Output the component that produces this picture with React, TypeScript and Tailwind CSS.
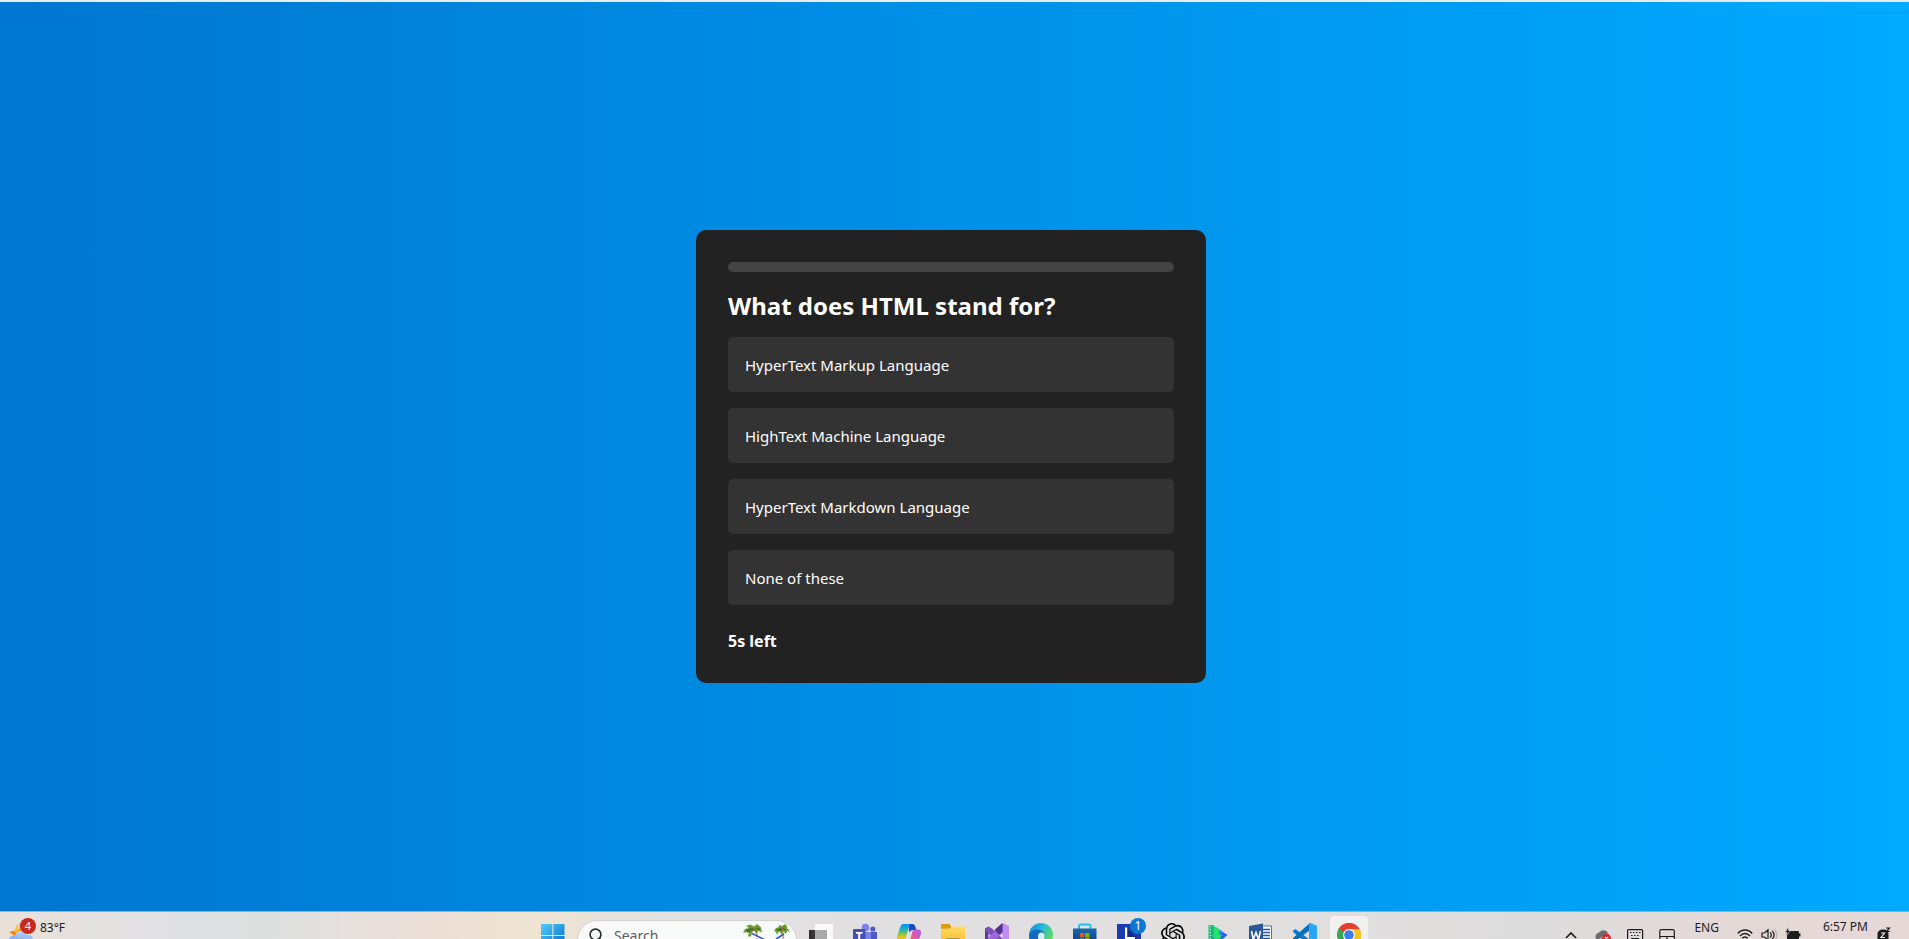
import type { ReactNode } from "react";
import { SiOpenai } from "react-icons/si";

const options = [
  "HyperText Markup Language",
  "HighText Machine Language",
  "HyperText Markdown Language",
  "None of these",
];

function QuizCard() {
  return (
    <section className="w-full max-w-[510px] rounded-[10px] bg-[#222222] p-8 text-white">
      <div
        className="h-2.5 rounded-[5px] bg-[#444444]"
        role="progressbar"
        aria-label="Quiz progress"
        aria-valuenow={0}
      />
      <h1 className="mt-4 mb-[13px] text-[24px] leading-9 font-bold">What does HTML stand for?</h1>
      <ul className="flex flex-col gap-4">
        {options.map((option) => (
          <li key={option}>
            <button
              type="button"
              className="block w-full rounded-[5px] bg-[#333333] px-[17px] pt-[17px] pb-[15px] text-left text-[15px] leading-[23px]"
            >
              {option}
            </button>
          </li>
        ))}
      </ul>
      <p className="mt-[26px] text-[16px] leading-5 font-bold">5s left</p>
    </section>
  );
}

function AppButton({ label, children }: { label: string; children: ReactNode }) {
  return (
    <button type="button" aria-label={label} className="shrink-0 pt-[11px]">
      <svg viewBox="0 0 24 24" className="block h-6 w-6 overflow-visible" aria-hidden="true">
        {children}
      </svg>
    </button>
  );
}

function Weather() {
  return (
    <button type="button" className="flex items-start gap-[7px] pl-[9px] text-left">
      <svg viewBox="0 0 24 28" className="block h-7 w-6 shrink-0 overflow-visible" aria-hidden="true">
        <defs>
          <linearGradient id="cloud" x1="0" y1="0" x2="0" y2="1">
            <stop stopColor="#b9d2fb" />
            <stop offset="1" stopColor="#7ba3ee" />
          </linearGradient>
        </defs>
        <path d="M10 10v9h6v-9l-3 6z" fill="#fbb91d" />
        <path d="M0 20l7 5 6-8-7 1.500z" fill="#f18a15" />
        <path d="M8.500 11l1.500 10-5-1z" fill="#fbc02d" />
        <circle cx="12" cy="25.500" r="6.500" fill="url(#cloud)" />
        <circle cx="4.500" cy="28" r="4.500" fill="#8fb1f3" />
        <circle cx="19.500" cy="27.500" r="4.500" fill="#9dbdf7" />
        <circle cx="19" cy="14" r="8" fill="#c42b1c" />
        <text x="19" y="18" textAnchor="middle" fontSize="11" fill="#fff">4</text>
      </svg>
      <span className="pt-[7px] text-[12px] leading-[18px]">
        <span className="block text-[#1b1b1b]">83°F</span>
        <span className="block text-[#5c5c5c]">Mostly cloudy</span>
      </span>
    </button>
  );
}

function SearchBox() {
  return (
    <label className="mx-3 mt-2 flex h-10 w-[220px] shrink-0 items-start rounded-full border border-[#d5d1d0] bg-[#f8f9f9] pl-2.5">
      <svg viewBox="0 0 16 16" className="mt-[7px] h-4 w-4 shrink-0" aria-hidden="true">
        <circle cx="7.500" cy="6.500" r="5.400" fill="none" stroke="#2b2b2b" strokeWidth="1.600" />
        <path d="M11.500 10.500L15 14" stroke="#2b2b2b" strokeWidth="1.600" />
      </svg>
      <input
        type="text"
        placeholder="Search"
        className="mt-[5px] ml-2.5 h-5 w-[118px] bg-transparent text-[14px] leading-5 outline-none placeholder:text-[#5f5f5f]"
      />
      <svg viewBox="0 0 50 20" className="mt-[3px] ml-2.5 h-5 w-[50px] shrink-0" aria-hidden="true">
        <path d="M13.500 6c1 3 1 8 .3 14h2c.4-6-.3-10-1.300-14zM40 6c.6 3 .6 8 0 14h2c.3-6 0-10-1-14z" fill="#d99b52" />
        <path d="M10 9.500l11 5.500 3 1M34 15l8-5" stroke="#2d61c4" strokeWidth="1.700" fill="none" />
        <path d="M12 12l8 4" stroke="#eef4ff" strokeWidth="1" />
        <path d="M1 9l2-4 4-1-3-2 4-1.500 4 2 3-2.500 3 2.500 1 1 1 5-4-2-1 4-3-4-2 2-1 4-3 0 1-5z" fill="#6d9a35" />
        <path d="M4 6l5-2 4 1 4-1.500 1.500 3-4-1.500-3 1-3 1-3 2z" fill="#3f7128" />
        <path d="M32 7l2-3 3-1 0-2 3 1 3-2 2 2 0 2 3 4-3-1-1 3-3-3-1 4-3-4-2 4-1-3z" fill="#6d9a35" />
        <path d="M34 6l4-2 3 0 4 2-4 0-2 1-3 0z" fill="#3f7128" />
        <circle cx="13" cy="6" r="1.200" fill="#b4622a" />
        <circle cx="40.500" cy="5" r="1.200" fill="#b4622a" />
      </svg>
    </label>
  );
}

function Apps() {
  return (
    <nav aria-label="Taskbar" className="flex items-start">
      <AppButton label="Start">
        <defs>
          <linearGradient id="win" gradientUnits="userSpaceOnUse" x1="0" y1="0" x2="24" y2="24">
            <stop stopColor="#52d3fc" />
            <stop offset="1" stopColor="#0067c8" />
          </linearGradient>
        </defs>
        <path d="M0 1h11.300v11H0zM12.300 1H23.500v11H12.300zM0 13h11.300v11H0zM12.300 13H23.500v11H12.300z" fill="url(#win)" />
      </AppButton>
      <SearchBox />
      <div className="flex items-start gap-5">
        <AppButton label="Task view">
          <defs>
            <linearGradient id="tv" x1="0" y1="0" x2="1" y2="0">
              <stop stopColor="#2d2b2a" />
              <stop offset="1" stopColor="#555" />
            </linearGradient>
          </defs>
          <path d="M6 1h18v18H6z" fill="#fafafa" />
          <path d="M0 7h18v16H0z" fill="url(#tv)" />
          <path d="M6 7h12v12H6z" fill="#a9a9a9" />
        </AppButton>
        <AppButton label="Teams">
          <circle cx="12.500" cy="4.500" r="3.800" fill="#7b83eb" />
          <circle cx="19.800" cy="6" r="2.600" fill="#5059c9" />
          <path d="M17 9h7v8a4 4 0 0 1-7 2z" fill="#4f58c6" />
          <path d="M8 9h10v9a5 5 0 0 1-10 0z" fill="#7b83eb" />
          <rect y="6" width="12.500" height="12.500" rx="1" fill="#464eb8" />
          <path d="M3 9h6.500v1.800H7.200V17h-2v-6.200H3z" fill="#fff" />
        </AppButton>
        <AppButton label="Copilot">
          <defs>
            <linearGradient id="cpA" x1="0" y1="0" x2="0" y2="1">
              <stop stopColor="#0a8df0" />
              <stop offset=".35" stopColor="#20b8b5" />
              <stop offset=".6" stopColor="#8cc63f" />
              <stop offset=".8" stopColor="#f5c518" />
              <stop offset="1" stopColor="#f08a24" />
            </linearGradient>
            <linearGradient id="cpB" x1="1" y1="0" x2="0" y2="1">
              <stop stopColor="#9b5cf6" />
              <stop offset=".5" stopColor="#f0569a" />
              <stop offset="1" stopColor="#f7854d" />
            </linearGradient>
          </defs>
          <path d="M11 1h4.500c1.500 0 2.300 1 2.800 2.500L19.500 7H16c-2 0-3 1-3.500 3z" fill="#1746c8" />
          <path d="M6.500 1H14c-1.500.3-2 2-2.500 4L8.500 16c-.5 1.500-1.500 2-3 2H3c-3 0-3.500-2.500-2.800-5L3.500 3.500C4 2 5 1 6.500 1z" fill="url(#cpA)" />
          <path d="M17.500 23H10c1.500-.3 2-2 2.500-4l3-10.500c.5-1.500 1.500-2 3-2H21c3 0 3.500 2.500 2.800 5l-3.300 9C20 22 19 23 17.500 23z" fill="url(#cpB)" />
        </AppButton>
        <AppButton label="File Explorer">
          <defs>
            <linearGradient id="fold" x1="0" y1="0" x2="0" y2="1">
              <stop stopColor="#ffdc6b" />
              <stop offset="1" stopColor="#fbb91f" />
            </linearGradient>
          </defs>
          <path d="M0 2.200C0 1.500.5 1 1.200 1h6.600c.6 0 1 .3 1.300.8L10.500 4H23c.6 0 1 .4 1 1v3H0z" fill="#dd9a0c" />
          <path d="M0 7c0-.8.4-1.300 1-1.300h7.500L10.500 3.500H23c.6 0 1 .5 1 1V21H0z" fill="url(#fold)" />
          <path d="M5 24v-7.500c0-.8.5-1.500 1.500-1.500h11c1 0 1.500.7 1.500 1.500V24z" fill="#a39650" />
        </AppButton>
        <AppButton label="Visual Studio">
          <path d="M0 5.500L3.500 3.500V20.500L0 18.500z" fill="#5b3a9e" />
          <path d="M3.500 3.500L7 5.500 20 18l-3 6L0 7z" fill="#7e50c0" />
          <path d="M17.500 0L20 8 5 21 0 18.500z" fill="#9a68d8" />
          <path d="M17.500 0L24 3v18l-6.500 3z" fill="#c08cf4" />
          <path d="M13 3.800L17.500 0v9L14 11.500 9.500 7z" fill="#54338f" />
        </AppButton>
        <AppButton label="Edge">
          <defs>
            <linearGradient id="edA" x1="0" y1="0" x2="1" y2=".5">
              <stop stopColor="#1684dc" />
              <stop offset=".5" stopColor="#27b9dc" />
              <stop offset="1" stopColor="#5fdc5a" />
            </linearGradient>
          </defs>
          <circle cx="12" cy="12" r="12" fill="url(#edA)" />
          <path d="M0 13C1 8 5 6 9 6.500c4 .3 7 3 7 6-1-2.500-6-3-7 .5-.8 4 3 8 7 9C8 26 0 21 0 13z" fill="#1269c2" />
          <path d="M9 13c0-2.500 2-4 4-3.500 2 .4 3 2 2.500 4-.5 1.500-.8 2 .5 3H10c-.7-1-1-2-1-3.500z" fill="#d9eef2" />
        </AppButton>
        <AppButton label="Microsoft Store">
          <defs>
            <linearGradient id="store" x1="0" y1="0" x2="0" y2="1">
              <stop stopColor="#1b66b0" />
              <stop offset="1" stopColor="#0c3a76" />
            </linearGradient>
          </defs>
          <path d="M6 7V3c0-1 .6-1.500 1.500-1.500h8.500c1 0 1.500.6 1.500 1.500v4" fill="none" stroke="#27bdf2" strokeWidth="2" />
          <path d="M0 5.500h23.500V20a3 3 0 0 1-3 3H3a3 3 0 0 1-3-3z" fill="url(#store)" />
          <path d="M7 10h4.200v4.200H7z" fill="#f25022" />
          <path d="M12.200 10h4.200v4.200h-4.200z" fill="#7fba00" />
          <path d="M7 15.200h4.200v4.200H7z" fill="#00a4ef" />
          <path d="M12.200 15.200h4.200v4.200h-4.200z" fill="#ffb900" />
        </AppButton>
        <AppButton label="Installer">
          <path d="M0 1h24v23H0z" fill="#1b3bae" />
          <path d="M10 5l14 14v5H8z" fill="#142c86" />
          <path d="M8 4.500h2.200V14H18v2.500H8z" fill="#fff" />
          <circle cx="21" cy="3" r="8" fill="#0b78d4" />
          <text x="21" y="7" textAnchor="middle" fontSize="12" fill="#fff">1</text>
        </AppButton>
        <button type="button" aria-label="ChatGPT" className="shrink-0 pt-[11px]">
          <SiOpenai className="block h-6 w-6 text-black" aria-hidden="true" />
        </button>
        <AppButton label="Media player">
          <path d="M13 6l9.500 6-8.500 7z" fill="#1e62e8" />
          <path d="M8 3l9 5-2 12-7 2z" fill="#2e8df0" />
          <path d="M3.500 2h5v20h-5z" fill="#15b07c" />
          <path d="M4.500 3.500h1.500M4.500 6.500h1.500M4.500 9.500h1.500M4.500 12.500h1.500M4.500 15.500h1.500" stroke="#a5f7d2" strokeWidth="1.400" />
          <path d="M8.500 2.500L14 6v6h3.500L12 18l-5.500-6h2z" fill="#25e46b" />
        </AppButton>
        <AppButton label="Word">
          <path d="M11 3h11.500v18H11z" fill="#fff" stroke="#2b579a" strokeWidth=".8" />
          <path d="M14 6.500h7M14 9.500h7M14 12.500h7M14 15.500h7" stroke="#2b579a" strokeWidth="1.300" />
          <path d="M0 3L14 .5v23L0 21z" fill="#2b579a" />
          <path d="M2.500 8l1.800 8.500L7 9.500l2.500 7L11.500 8" fill="none" stroke="#fff" strokeWidth="1.600" />
        </AppButton>
        <AppButton label="Visual Studio Code">
          <path d="M1.500 6.500L.3 7.800c-.4.400-.4 1 0 1.400L18 24v-6.300L3 6.400c-.5-.3-1-.2-1.500.1z" fill="#0b7ac8" />
          <path d="M1.500 17.500L.3 16.200c-.4-.4-.4-1 0-1.400L17 0l1 6.300L3 17.600c-.5.300-1 .2-1.500-.1z" fill="#0a6fbd" />
          <path d="M17.500 0L24 2.800v18.400L17.500 24c-.8 0-1.500-.5-1.500-1.500V1.200c0-.8.700-1.200 1.500-1.200z" fill="#2aa6f2" />
        </AppButton>
      </div>
      <button
        type="button"
        aria-label="Chrome"
        className="mt-1 ml-[13px] shrink-0 rounded-[4px] bg-[#f3f0f0] px-[7px] pt-[7px] pb-[9px]"
      >
        <svg viewBox="0 0 24 24" className="block h-6 w-6" aria-hidden="true">
          <circle cx="12" cy="12" r="12" fill="#34a853" />
          <path d="M12 12L1.600 6A12 12 0 0 1 22.400 6z" fill="#ea3d30" />
          <path d="M12 6h10.400A12 12 0 0 1 12 24l5.200-9z" fill="#fcc31e" />
          <path d="M1.600 6l5.200 9 5.200-3z" fill="#34a853" />
          <circle cx="12" cy="12" r="6" fill="#fff" />
          <circle cx="12" cy="12" r="4.800" fill="#3b7ded" />
        </svg>
      </button>
    </nav>
  );
}

function TrayIcon({ label, children }: { label: string; children: ReactNode }) {
  return (
    <button type="button" aria-label={label} className="shrink-0 pt-[15px]">
      <svg
        viewBox="0 0 16 16"
        className="block h-4 w-4 overflow-visible"
        fill="none"
        stroke="#1c1c1c"
        strokeWidth="1.200"
        aria-hidden="true"
      >
        {children}
      </svg>
    </button>
  );
}

function Tray() {
  return (
    <div className="flex items-start justify-end pr-[17px] text-[12px] leading-4 text-[#1b1b1b]">
      <div className="flex gap-4">
        <TrayIcon label="Show hidden icons">
          <path d="M3 11l5-5 5 5" strokeWidth="1.600" />
        </TrayIcon>
        <TrayIcon label="OneDrive">
          <path d="M1 12C-.5 8 2 6 4 5.500 6 2.500 11 2 13 6l2 4-3 5H3z" fill="#6c6c6c" stroke="none" />
          <path d="M2 13L13 6l2 4-2 4H4z" fill="#a9a9a9" stroke="none" />
          <circle cx="11.500" cy="11.500" r="4.500" fill="#d9222f" stroke="none" />
          <path d="M9.800 9.800l3.400 3.400M13.200 9.800l-3.400 3.400" stroke="#fff" />
        </TrayIcon>
        <TrayIcon label="Touch keyboard">
          <rect x=".6" y="2.600" width="15" height="12" rx="1" />
          <path d="M3 5.500h1.500M6 5.500h1.500M9 5.500h1.500M12 5.500h1.500M4 8.500h1.500M7 8.500h1.500M10 8.500h1.500M4 11.500h8" />
        </TrayIcon>
        <TrayIcon label="Touchpad">
          <rect x=".8" y="2.600" width="14.500" height="12" rx="1.500" />
          <path d="M1 9.500h14M8 9.500v5" />
        </TrayIcon>
      </div>
      <span className="ml-[19px] pt-2">ENG</span>
      <div className="ml-[18px] flex gap-2">
        <TrayIcon label="Wi-Fi">
          <path d="M.8 6.500c4-4.700 10.400-4.700 14.400 0M3 9c3-3.300 7-3.300 10 0M5.200 11.300c1.700-1.800 3.900-1.800 5.600 0" strokeWidth="1.400" />
          <circle cx="8" cy="13.500" r="1.200" fill="#1c1c1c" stroke="none" />
        </TrayIcon>
        <TrayIcon label="Volume">
          <path d="M1 6h2.500L7 2.800v10.400L3.500 10H1z" />
          <path d="M9.200 5.500c1.300 1.500 1.300 3.500 0 5M11.200 3.800c2.300 2.500 2.300 5.900 0 8.400" />
          <path d="M13.200 2c3.300 3.500 3.300 8.500 0 12" stroke="#b9b2b2" />
        </TrayIcon>
        <TrayIcon label="Battery">
          <path d="M4.500 4H13a1 1 0 0 1 1 1v1.500h1.500v3H14V13H2V8z" fill="#1c1c1c" stroke="none" />
          <path d="M3.500 0L0 5.500h2L1 9.500 5.500 3.500h-2z" fill="#1c1c1c" stroke="#e5d9d8" strokeWidth=".6" />
        </TrayIcon>
      </div>
      <span className="ml-[22px] pt-[7px]">6:57 PM</span>
      <div className="ml-2">
        <TrayIcon label="Notifications">
          <path d="M1.500 13V7.500C1.500 4 4 2.500 7 2.500c3.500 0 5.500 1.500 5.500 5V13l1.500 2H0z" fill="#1c1c1c" stroke="none" />
          <path d="M5 6h3.500L5 10.500h4" stroke="#eee" />
          <path d="M10 1h3.500L10.500 4.500H14" />
        </TrayIcon>
      </div>
    </div>
  );
}

export default function App() {
  return (
    <div className="flex h-screen flex-col overflow-hidden font-['Noto_Sans','Open_Sans',sans-serif]">
      <div className="h-0.5 shrink-0 bg-[#e9edf1]" />
      <main className="flex flex-1 items-center justify-center bg-linear-to-r from-[#0077d0] to-[#00aaff] pr-[7px]">
        <QuizCard />
      </main>
      <footer className="grid h-7 shrink-0 grid-cols-[1fr_auto_1fr] items-start overflow-hidden border-t border-[#a9a9ad] bg-[linear-gradient(to_right,#eae0da_0%,#e0e0e4_9%,#dadfdd_14%,#e6e0de_18%,#eddfd6_23%,#efe4d1_28%,#e3e1e0_35%,#e2dfe2_45%,#e1dfde_65%,#dddcdc_81%,#e4d9d8_90%,#e6d8d6_100%)]">
        <Weather />
        <Apps />
        <Tray />
      </footer>
    </div>
  );
}
